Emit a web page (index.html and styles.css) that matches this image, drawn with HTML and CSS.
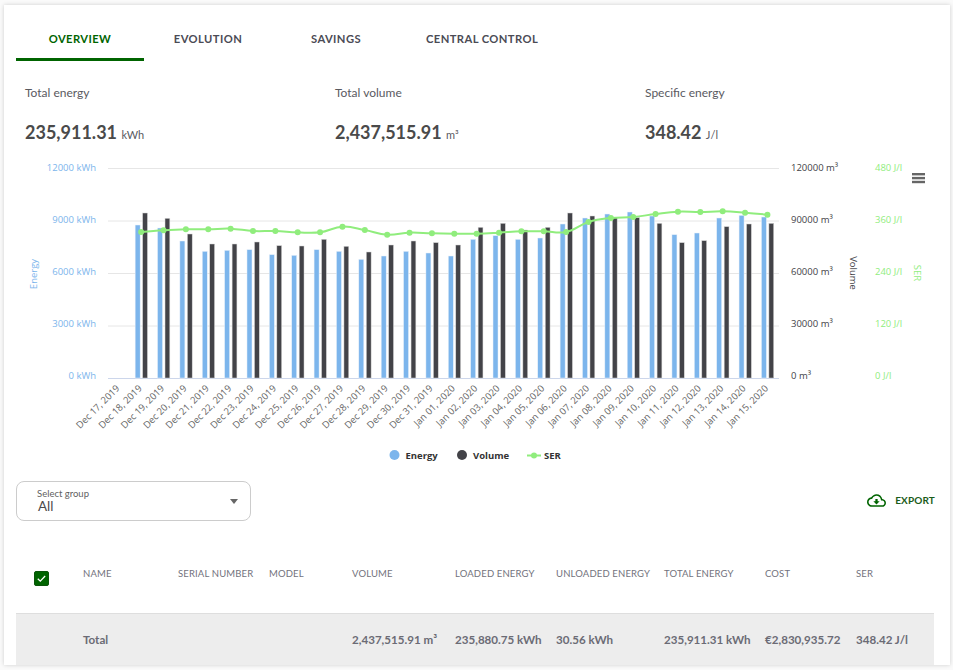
FILE: index.html
```html
<!DOCTYPE html>
<html lang="en">
<head>
<meta charset="utf-8">
<title>Overview</title>
<link rel="stylesheet" href="styles.css">
</head>
<body>
<main class="card">
  <nav class="tabs">
    <a class="tab tab-active">OVERVIEW</a>
    <a class="tab">EVOLUTION</a>
    <a class="tab">SAVINGS</a>
    <a class="tab">CENTRAL CONTROL</a>
  </nav>
  <section class="stats">
    <div class="stat"><div class="stat-label">Total energy</div><div class="stat-value">235,911.31 <span class="unit">kWh</span></div></div>
    <div class="stat"><div class="stat-label">Total volume</div><div class="stat-value">2,437,515.91 <span class="unit">m³</span></div></div>
    <div class="stat"><div class="stat-label">Specific energy</div><div class="stat-value">348.42 <span class="unit">J/l</span></div></div>
  </section>
  <svg id="chart" class="chart" viewBox="4 158 946 312" width="946" height="312" xmlns="http://www.w3.org/2000/svg"></svg>
  <section class="toolbar">
    <div class="select">
      <div class="select-text">
        <div class="select-label">Select group</div>
        <div class="select-value">All</div>
      </div>
      <span class="select-arrow"></span>
    </div>
    <a class="export">
      <svg class="export-icon" viewBox="0 0 24 24" xmlns="http://www.w3.org/2000/svg"><path d="M19.35 10.04C18.67 6.59 15.64 4 12 4 9.11 4 6.6 5.64 5.35 8.04 2.34 8.36 0 10.91 0 14c0 3.31 2.69 6 6 6h13c2.76 0 5-2.24 5-5 0-2.64-2.05-4.78-4.65-4.96zM19 18H6c-2.21 0-4-1.79-4-4 0-2.05 1.53-3.76 3.56-3.97l1.07-.11.5-.95C8.08 7.14 9.94 6 12 6c2.62 0 4.88 1.86 5.39 4.43l.3 1.5 1.53.11c1.56.1 2.78 1.41 2.78 2.96 0 1.65-1.35 3-3 3zm-5.55-8h-2.9v3H8l4 4 4-4h-2.55z"/></svg>
      <span>EXPORT</span>
    </a>
  </section>
  <section class="table">
    <div class="row row-head">
      <div class="cell cell-check">
        <span class="checkbox"><svg viewBox="0 0 15 15" xmlns="http://www.w3.org/2000/svg"><path class="check-mark" d="M3.2 7.8l2.9 2.8 5.6-6"/></svg></span>
      </div>
      <div class="cell">NAME</div>
      <div class="cell">SERIAL NUMBER</div>
      <div class="cell">MODEL</div>
      <div class="cell">VOLUME</div>
      <div class="cell">LOADED ENERGY</div>
      <div class="cell">UNLOADED ENERGY</div>
      <div class="cell">TOTAL ENERGY</div>
      <div class="cell">COST</div>
      <div class="cell">SER</div>
    </div>
    <div class="row row-total">
      <div class="cell"></div>
      <div class="cell">Total</div>
      <div class="cell"></div>
      <div class="cell"></div>
      <div class="cell">2,437,515.91 m³</div>
      <div class="cell">235,880.75 kWh</div>
      <div class="cell">30.56 kWh</div>
      <div class="cell">235,911.31 kWh</div>
      <div class="cell">€2,830,935.72</div>
      <div class="cell">348.42 J/l</div>
    </div>
  </section>
</main>
<script src="chart.js"></script>
</body>
</html>
```

FILE: styles.css
```css
* { box-sizing: border-box; }
html, body { margin: 0; height: 670px; overflow: hidden; }
body {
  background: #fafafa;
  padding: 5px 3px 5px 4px;
  font-family: "Lato", "Noto Sans", sans-serif;
  color: #4a4a4a;
}
.card {
  height: 660px;
  background: #fff;
  box-shadow: 0 0 4px rgba(0, 0, 0, .18);
  padding: 0 16px 0 12px;
  overflow: hidden;
}
.tabs { display: flex; height: 56px; padding-top: 12px; }
.tab {
  min-width: 128px;
  padding: 0 26px;
  height: 44px;
  line-height: 43px;
  text-align: center;
  font-size: 11.2px;
  font-weight: 700;
  letter-spacing: .42px;
  color: #4b4b55;
  border-bottom: 3px solid transparent;
  white-space: nowrap;
}
.tab-active { color: #006400; border-bottom-color: #006400; }
.stats { display: grid; grid-template-columns: repeat(3, 310px); padding: 22px 0 0 9px; height: 97px; }
.stat-label { font-size: 12px; line-height: 20px; color: #5a5a5f; }
.stat-value { margin-top: 17px; font-size: 18px; line-height: 24px; font-weight: 700; color: #4a4a4a; white-space: nowrap; }
.unit { font-size: 11px; font-weight: 400; color: #5a5a5f; }
.chart { display: block; margin-left: -12px; }
.chart text { font-family: "Open Sans", "Noto Sans", sans-serif; font-size: 9.5px; }
.grid-line { stroke: #e6e6e6; stroke-width: 1; }
.axis-line { stroke: #ccd6eb; stroke-width: 1; }
.c-energy { fill: #7cb5ec; }
.c-volume { fill: #434348; }
.c-ser { fill: #90ed7d; }
.bar-energy { fill: #7cb5ec; stroke: #e9f1fa; stroke-width: .5; }
.bar-volume { fill: #434348; stroke: #d5d5d5; stroke-width: .5; }
.ser-line { fill: none; stroke: #90ed7d; stroke-width: 2; }
.point { fill: #90ed7d; }
.x-label { fill: #666; }
.chart .legend-label { font-size: 9.5px; font-weight: 700; fill: #333; }
.menu-bar { fill: #666; }
.toolbar { display: flex; justify-content: space-between; align-items: flex-start; height: 86px; margin-top: 11px; }
.select {
  width: 235px;
  height: 40px;
  border: 1px solid #ccc;
  border-radius: 8px;
  display: flex;
  align-items: center;
  justify-content: space-between;
  padding: 0 12px 0 20px;
}
.select-label { font-size: 9.5px; line-height: 11px; color: #5f5f5f; }
.select-value { font-size: 13.5px; line-height: 15px; color: #4a4a4a; padding-left: 1px; }
.select-arrow { width: 0; height: 0; border: 4.5px solid transparent; border-top: 5px solid #666; border-bottom: 0; }
.export { display: flex; align-items: center; gap: 9px; margin: 9px -1px 0 0; font-size: 10px; font-weight: 700; letter-spacing: .15px; color: #1a5c1a; height: 20px; }
.export-icon { width: 19px; height: 19px; fill: #006400; }
.table { width: 918px; }
.row { display: grid; grid-template-columns: 67px 95px 91px 83px 103px 101px 108px 101px 91px 78px; }
.row-head { height: 46px; font-size: 9.5px; letter-spacing: .15px; color: #72727c; align-items: start; }
.row-head .cell { line-height: 14px; white-space: nowrap; }
.cell-check { padding: 0 0 0 18px; }
.checkbox { display: block; width: 15px; height: 15px; background: #006400; border-radius: 2px; border: 1px solid #0b550b; margin-top: 4px; }
.checkbox svg { display: block; width: 13px; height: 13px; }
.check-mark { fill: none; stroke: #fff; stroke-width: 1.5; }
.row-total {
  height: 52px;
  background: #ededed;
  border-top: 1px solid #dedede;
  align-items: center;
  font-size: 11.6px;
  font-weight: 700;
  color: #6b6b75;
  white-space: nowrap;
}
```

FILE: chart.js
```javascript
(function () {
  var NS = 'http://www.w3.org/2000/svg';
  var svg = document.getElementById('chart');
  function el(name, attrs, text) {
    var n = document.createElementNS(NS, name);
    for (var k in attrs) n.setAttribute(k, attrs[k]);
    if (text !== undefined) n.textContent = text;
    svg.appendChild(n);
    return n;
  }
  var dates = ['Dec 17, 2019','Dec 18, 2019','Dec 19, 2019','Dec 20, 2019','Dec 21, 2019','Dec 22, 2019','Dec 23, 2019','Dec 24, 2019','Dec 25, 2019','Dec 26, 2019','Dec 27, 2019','Dec 28, 2019','Dec 29, 2019','Dec 30, 2019','Dec 31, 2019','Jan 01, 2020','Jan 02, 2020','Jan 03, 2020','Jan 04, 2020','Jan 05, 2020','Jan 06, 2020','Jan 07, 2020','Jan 08, 2020','Jan 09, 2020','Jan 10, 2020','Jan 11, 2020','Jan 12, 2020','Jan 13, 2020','Jan 14, 2020','Jan 15, 2020'];
  // Tops of the bars and line points, in page pixels x 3, offset from y = 150.
  var energy = [225,234,273,304,301,299,314,316,299,304,328,318,304,309,318,268,257,268,264,222,204,192,186,198,254,249,204,196,201];
  var volume = [189,205,252,282,282,276,287,288,268,289,306,285,273,278,285,232,220,240,232,189,198,203,203,220,278,272,230,222,220];
  var ser = [246,241,238,238,236,243,243,247,247,230,240,254,248,250,251,251,248,244,244,246,216,204,201,192,185,186,184,188,194];

  var left = 108, right = 779, top = 168, base = 378, step = 52.5, cat = (right - left) / 30;
  var leftLabels = ['12000 kWh','9000 kWh','6000 kWh','3000 kWh','0 kWh'];
  var midLabels = ['120000 m³','90000 m³','60000 m³','30000 m³','0 m³'];
  var rightLabels = ['480 J/l','360 J/l','240 J/l','120 J/l','0 J/l'];

  for (var r = 0; r < 5; r++) {
    var y = top + step * r;
    el('line', { x1: left, x2: right, y1: y + .5, y2: y + .5, 'class': r === 4 ? 'axis-line' : 'grid-line' });
    var ty = y + 2.5 - r * .45;
    el('text', { x: 96, y: ty, 'text-anchor': 'end', 'class': 'c-energy' }, leftLabels[r]);
    el('text', { x: 791, y: ty, 'class': 'c-volume' }, midLabels[r]);
    el('text', { x: 875, y: ty, 'class': 'c-ser' }, rightLabels[r]);
  }

  function px(v) { return 150 + v / 3; }
  function cx(i) { return left + cat * (i + 1.5) - .4; }

  energy.forEach(function (v, i) {
    el('rect', { x: cx(i) - 6, y: px(v), width: 5, height: base - px(v), 'class': 'bar-energy' });
    var t = px(volume[i]);
    el('rect', { x: cx(i) + 1.5, y: t, width: 4.8, height: base - t, 'class': 'bar-volume' });
  });

  var d = '';
  var s = 1.5, a = s + 1;
  function ctrl(i) {
    var x = cx(i), y = px(ser[i]);
    if (i === 0 || i === ser.length - 1) return { lx: x, ly: y, rx: x, ry: y };
    var px0 = cx(i - 1), py0 = px(ser[i - 1]), px1 = cx(i + 1), py1 = px(ser[i + 1]);
    var lx = (s * x + px0) / a, ly = (s * y + py0) / a, rx = (s * x + px1) / a, ry = (s * y + py1) / a;
    var corr = (ry - ly) * (rx - x) / (rx - lx) + y - ry;
    return { lx: lx, ly: ly + corr, rx: rx, ry: ry + corr };
  }
  ser.forEach(function (v, i) {
    var x = cx(i), y = px(v);
    if (i === 0) { d = 'M' + x + ' ' + y; return; }
    var p = ctrl(i - 1), c = ctrl(i);
    d += ' C' + p.rx + ' ' + p.ry + ' ' + c.lx + ' ' + c.ly + ' ' + x + ' ' + y;
  });
  el('path', { d: d, 'class': 'ser-line' });
  ser.forEach(function (v, i) { el('circle', { cx: cx(i), cy: px(v), r: 3, 'class': 'point' }); });

  dates.forEach(function (t, i) {
    var x = left + cat * (i + .5) + 1, y = 389;
    el('text', { x: x, y: y, 'text-anchor': 'end', transform: 'rotate(-45 ' + x + ' ' + y + ')', 'class': 'x-label' }, t);
  });

  el('text', { x: 0, y: 0, 'text-anchor': 'middle', transform: 'translate(37 274) rotate(-90)', 'class': 'c-energy' }, 'Energy');
  el('text', { x: 0, y: 0, 'text-anchor': 'middle', transform: 'translate(850 273) rotate(90)', 'class': 'c-volume' }, 'Volume');
  el('text', { x: 0, y: 0, 'text-anchor': 'middle', transform: 'translate(914 273) rotate(90)', 'class': 'c-ser' }, 'SER');

  [173, 176.9, 180.8].forEach(function (y) {
    el('rect', { x: 912, y: y, width: 13, height: 2.4, 'class': 'menu-bar' });
  });

  el('circle', { cx: 394.5, cy: 455, r: 5, 'class': 'c-energy' });
  el('text', { x: 405.5, y: 458.5, 'class': 'legend-label' }, 'Energy');
  el('circle', { cx: 462, cy: 455, r: 5, 'class': 'c-volume' });
  el('text', { x: 473, y: 458.5, 'class': 'legend-label' }, 'Volume');
  el('line', { x1: 527, x2: 541, y1: 455.5, y2: 455.5, 'class': 'ser-line' });
  el('circle', { cx: 534, cy: 455.5, r: 3, 'class': 'point' });
  el('text', { x: 544, y: 458.5, 'class': 'legend-label' }, 'SER');
})();
```
